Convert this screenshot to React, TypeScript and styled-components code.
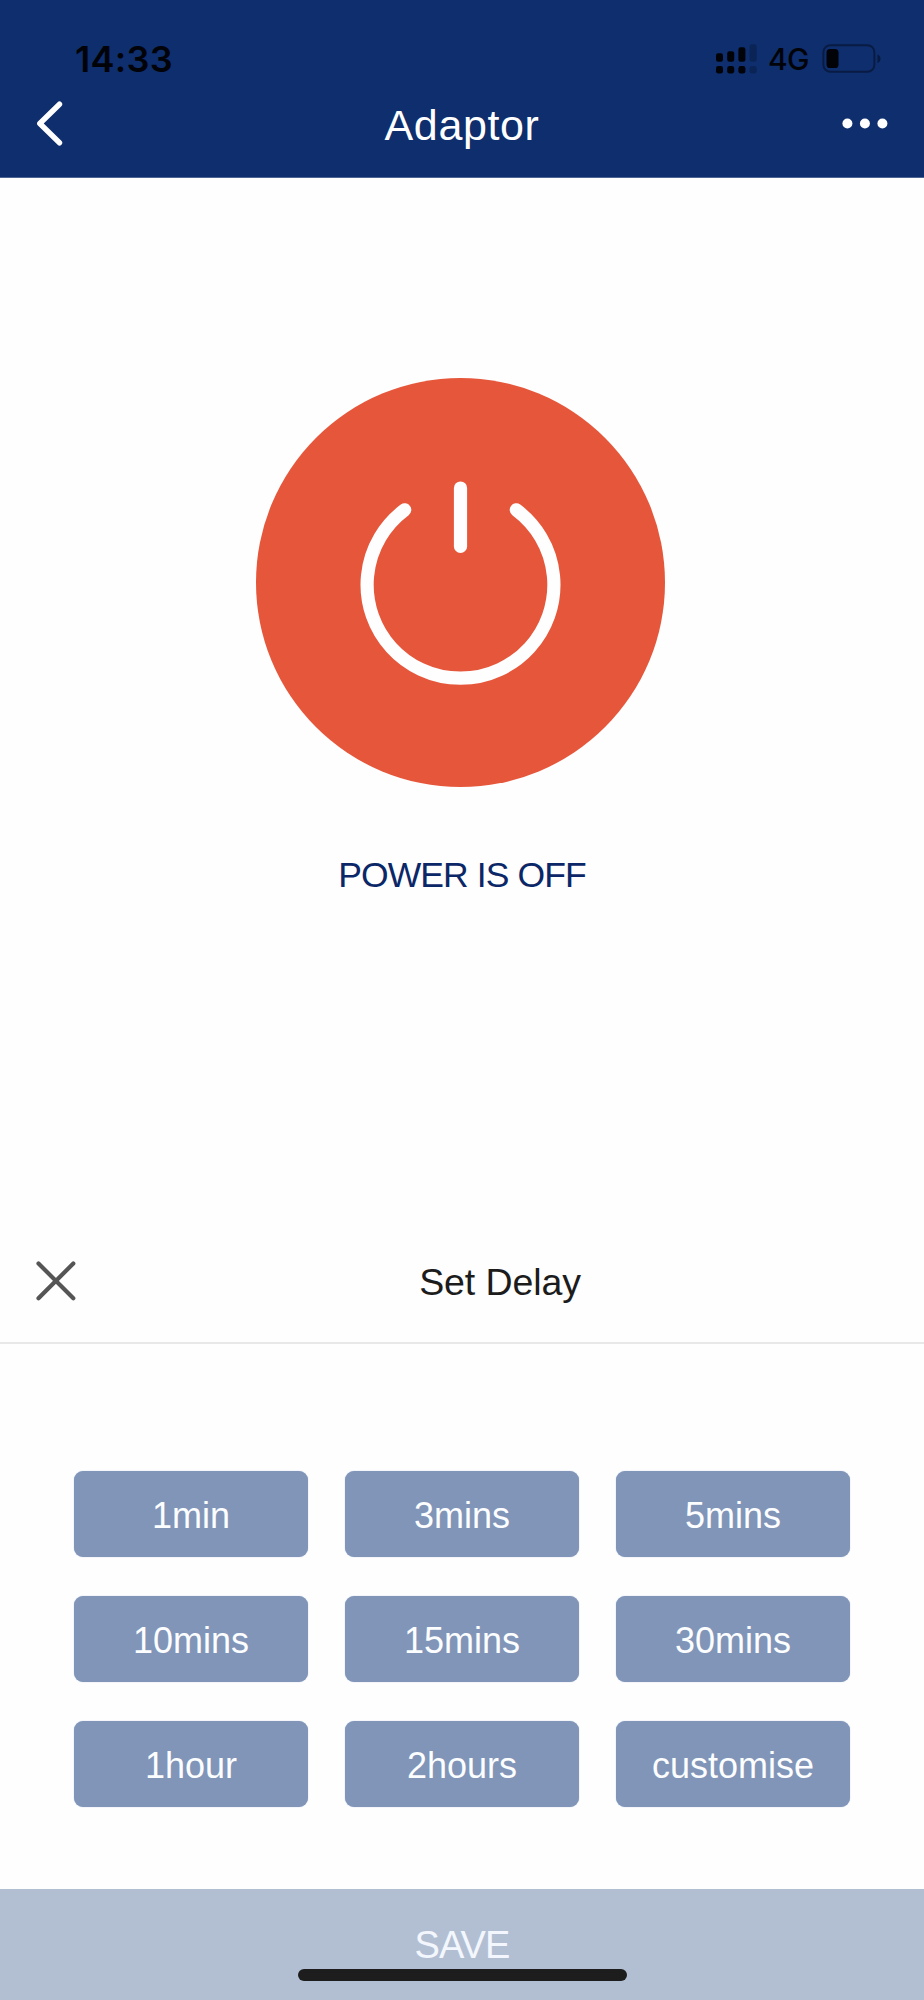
import React from "react";
import styled, { createGlobalStyle } from "styled-components";

const GlobalStyle = createGlobalStyle`
  *, *::before, *::after { box-sizing: border-box; }
  body { margin: 0; background: #fefefe; }
  button { border: 0; padding: 0; margin: 0; background: none; font: inherit; color: inherit; }
  svg { display: block; flex: none; }
`;

const Screen = styled.div`
  width: 924px;
  height: 2000px;
  display: flex;
  flex-direction: column;
  overflow: hidden;
  background: #fefefe;
  font-family: "Liberation Sans", Arial, sans-serif;
`;

const Header = styled.header`
  height: 178px;
  flex: none;
  background: #0e2e6d;
  border-bottom: 1px solid #4c6594;
`;

const StatusBar = styled.div`
  height: 84px;
  padding: 36px 43px 0 75px;
  display: flex;
  justify-content: space-between;
  color: #020308;
  font-family: Inter, sans-serif;
`;

const Clock = styled.span`
  font-size: 36px;
  line-height: 46px;
  font-weight: 600;
  letter-spacing: 0.3px;
`;

const StatusIcons = styled.div`
  display: flex;
  height: 46px;
`;

const Network = styled.span`
  width: 53px;
  margin-left: 10px;
  font-size: 30px;
  line-height: 47px;
  font-weight: 450;
  letter-spacing: -0.8px;
`;

const NavBar = styled.nav`
  height: 80px;
  padding: 0 36px;
  display: grid;
  grid-template-columns: 48px 1fr 48px;
  align-items: center;
  color: #fff;
`;

const NavTitle = styled.h1`
  margin: 1px 0 -1px;
  font-size: 43px;
  line-height: 80px;
  font-weight: 400;
  letter-spacing: 0.6px;
  text-align: center;
`;

const IconButton = styled.button`
  display: flex;
  height: 80px;
  align-items: center;
`;

const CloseButton = styled(IconButton)`
  padding-top: 10px;
`;

const PowerPanel = styled.main`
  height: 1034px;
  flex: none;
  padding-top: 200.3px;
  display: flex;
  flex-direction: column;
  align-items: center;
`;

const PowerButton = styled.button`
  width: 409px;
  height: 409px;
  margin-right: 3px;
  border-radius: 50%;
  background: #e6563a;
`;

const PowerLabel = styled.p`
  margin: 65.7px 0 0;
  font-size: 35.5px;
  line-height: 44px;
  letter-spacing: -0.9px;
  color: #0b2767;
`;

const SheetHeader = styled.div`
  height: 132px;
  flex: none;
  padding: 0 36px;
  display: grid;
  grid-template-columns: 76px 1fr;
  align-items: center;
  border-bottom: 2px solid #e8e8e8;
`;

const SheetTitle = styled.h2`
  margin: 10px 0 0;
  font-size: 37.5px;
  line-height: 44px;
  font-weight: 400;
  letter-spacing: -0.1px;
  text-align: center;
  color: #1c1c1c;
`;

const DelayGrid = styled.div`
  height: 545px;
  flex: none;
  padding: 127.3px 74px 0;
  display: grid;
  grid-template-columns: repeat(3, 234px);
  grid-auto-rows: 86px;
  gap: 39px 37px;
`;

const DelayButton = styled.button`
  padding-top: 3px;
  border-radius: 9px;
  background: #8195b8;
  box-shadow: 0 0 1px #8fa7cf;
  color: #fcfdff;
  font-size: 36px;
  line-height: 44px;
  text-align: center;
`;

const SaveButton = styled.button`
  position: relative;
  flex: 1;
  padding-top: 1px;
  background: #b2bfd3;
  color: #f3f7fd;
  font-size: 38px;
  line-height: 44px;
  letter-spacing: -0.9px;
  text-align: center;
`;

const HomeIndicator = styled.span`
  position: absolute;
  left: 297.5px;
  bottom: 19.5px;
  width: 329.5px;
  height: 11.5px;
  border-radius: 6px;
  background: #1c1d1c;
`;

const signalColumns = [
  { x: 0, top: 9 },
  { x: 11.2, top: 7 },
  { x: 22.4, top: 3 },
  { x: 33.6, top: 0 },
];

const SignalIcon = () => (
  <svg width="42" height="46" viewBox="0 0 42 46" fill="#020308">
    {signalColumns.map(({ x, top }, i) => (
      <g key={x} opacity={i === 3 ? 0.22 : 1}>
        <rect x={x} y={top + 8.3} width="7" height={17.4 - top} rx="2.2" />
        <rect x={x} y="30" width="7" height="7.6" rx="2.4" />
      </g>
    ))}
  </svg>
);

const BatteryIcon = () => (
  <svg width="60" height="46" viewBox="0 0 60 46">
    <rect x="2.4" y="9.2" width="51" height="26.6" rx="7" fill="none" stroke="#020308" strokeOpacity=".42" strokeWidth="1.9" />
    <rect x="5.5" y="13" width="12" height="19" rx="3.6" fill="#020308" />
    <path d="M56.500 18.500c4 1.500 4 7 0 8.500z" fill="#020308" opacity=".45" />
  </svg>
);

const BackIcon = () => (
  <svg width="30" height="48" viewBox="0 0 30 48" fill="none" stroke="#fff" strokeWidth="5.4" strokeLinecap="round" strokeLinejoin="round">
    <path d="M23.500 4.200L3.800 23.500L23.500 42.800" />
  </svg>
);

const MoreIcon = () => (
  <svg width="48" height="12" viewBox="0 0 48 12" fill="#fff">
    <circle cx="7.400" cy="5.500" r="5" />
    <circle cx="24.900" cy="5.500" r="5" />
    <circle cx="42.400" cy="5.500" r="5" />
  </svg>
);

const PowerIcon = () => (
  <svg width="409" height="409" viewBox="0 0 409 409" fill="none" stroke="#fefefe" strokeWidth="13.200" strokeLinecap="round">
    <path d="M204.500 110V168.400" />
    <path d="M148.700 131.900A93.400 93.400 0 1 0 260.300 131.900" />
  </svg>
);

const CloseIcon = () => (
  <svg width="42" height="42" viewBox="0 0 42 42" stroke="#555" strokeWidth="4.200" strokeLinecap="round">
    <path d="M2.500 2.500L37.300 37.300M37.300 2.500L2.500 37.300" />
  </svg>
);

const delays = ["1min", "3mins", "5mins", "10mins", "15mins", "30mins", "1hour", "2hours", "customise"];

export default function App() {
  return (
    <Screen>
      <GlobalStyle />
      <Header>
        <StatusBar>
          <Clock>14:33</Clock>
          <StatusIcons>
            <SignalIcon />
            <Network>4G</Network>
            <BatteryIcon />
          </StatusIcons>
        </StatusBar>
        <NavBar>
          <IconButton aria-label="Back"><BackIcon /></IconButton>
          <NavTitle>Adaptor</NavTitle>
          <IconButton aria-label="More"><MoreIcon /></IconButton>
        </NavBar>
      </Header>
      <PowerPanel>
        <PowerButton aria-label="Power"><PowerIcon /></PowerButton>
        <PowerLabel>POWER IS OFF</PowerLabel>
      </PowerPanel>
      <SheetHeader>
        <CloseButton aria-label="Close"><CloseIcon /></CloseButton>
        <SheetTitle>Set Delay</SheetTitle>
      </SheetHeader>
      <DelayGrid>
        {delays.map((label) => (
          <DelayButton key={label}>{label}</DelayButton>
        ))}
      </DelayGrid>
      <SaveButton>
        SAVE
        <HomeIndicator />
      </SaveButton>
    </Screen>
  );
}
